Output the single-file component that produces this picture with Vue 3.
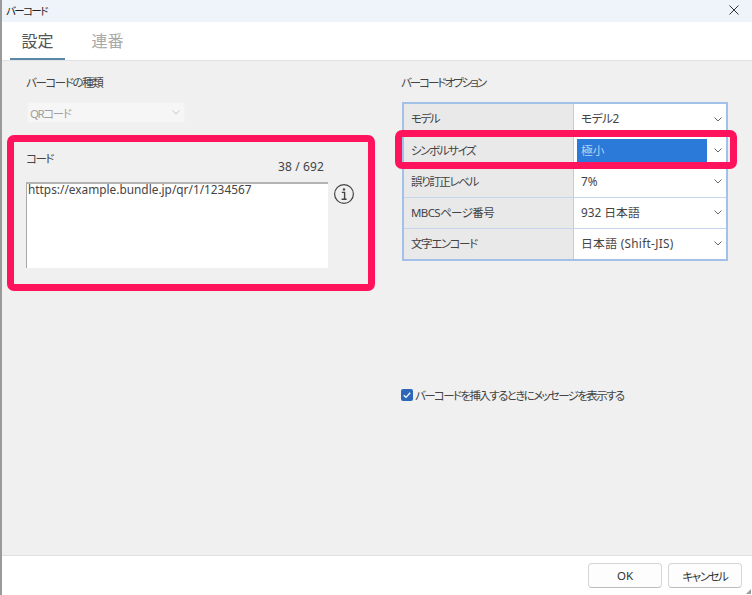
<script setup>
const rows = [
  { label: 'モデル', value: 'モデル2', labelClass: 'kana', valueClass: 'semi' },
  { label: 'シンボルサイズ', value: '極小', labelClass: 'kana', selected: true },
  { label: '誤り訂正レベル', value: '7%', labelClass: 'kana' },
  { label: 'MBCSページ番号', value: '932 日本語', labelClass: 'semi' },
  { label: '文字エンコード', value: '日本語 (Shift-JIS)', labelClass: 'kana', valueClass: 'wide' },
]
</script>

<template>
  <div class="window">
    <header class="titlebar">
      <span class="title">バーコード</span>
      <svg class="close" width="10" height="10" viewBox="0 0 10 10"><path d="M0.5 0.5 9.5 9.5M9.5 0.5 0.5 9.5" stroke="#333" stroke-width="1" fill="none" /></svg>
    </header>
    <nav class="tabs">
      <div class="tab active">設定</div>
      <div class="tab">連番</div>
    </nav>
    <main class="body">
      <section class="left">
        <div class="label kana">バーコードの種類</div>
        <div class="type-select">
          <span class="kana">QRコード</span>
          <svg width="8" height="5" viewBox="0 0 8 5"><path d="M0.5 0.5 4 4 7.5 0.5" stroke="#c4c4c4" fill="none" /></svg>
        </div>
        <div class="code-block">
          <div class="code-head">
            <span class="label kana">コード</span>
            <span class="count">38 / 692</span>
          </div>
          <div class="code-row">
            <div class="code-input">https://example.bundle.jp/qr/1/1234567</div>
            <svg class="info" width="22" height="22" viewBox="0 0 22 22">
              <circle cx="11" cy="11" r="9.4" stroke="#444" stroke-width="1.2" fill="none" />
              <circle cx="11" cy="6.4" r="1.2" fill="#444" />
              <path d="M8.8 9.4H11.6V16M8.6 16.2H13.6" stroke="#444" stroke-width="1.4" fill="none" />
            </svg>
          </div>
        </div>
      </section>
      <section class="right">
        <div class="label wider-kana">バーコードオプション</div>
        <div class="grid">
          <div v-for="row in rows" :key="row.label" class="row">
            <div class="cell-label" :class="row.labelClass">{{ row.label }}</div>
            <div class="cell-value">
              <span class="value" :class="[row.valueClass, { selected: row.selected }]">{{ row.value }}</span>
              <svg width="8" height="5" viewBox="0 0 8 5"><path d="M0.5 0.5 4 4 7.5 0.5" stroke="#666" fill="none" /></svg>
            </div>
          </div>
        </div>
        <label class="check">
          <span class="box">
            <svg width="10" height="10" viewBox="0 0 10 10"><path d="M1.8 5.2 4 7.4 8.2 2.8" stroke="#fff" stroke-width="1.3" fill="none" /></svg>
          </span>
          <span class="check-text">バーコードを挿入するときにメッセージを表示する</span>
        </label>
      </section>
    </main>
    <footer class="footer">
      <button class="btn">OK</button>
      <button class="btn kana">キャンセル</button>
    </footer>
    <svg class="grip" width="5" height="5" viewBox="0 0 5 5"><path d="M5 0V5H0Z" fill="#9a9a9a" /></svg>
    <div class="mark mark-left"></div>
    <div class="mark mark-right"></div>
  </div>
</template>

<style>
html, body { margin: 0; background: #fff; }
</style>

<style scoped>
.window {
  position: relative;
  width: 752px;
  height: 595px;
  box-sizing: border-box;
  display: flex;
  flex-direction: column;
  border-left: 2px solid #9a9a9a;
  background: #fff;
  color: #333;
  font-family: "Noto Sans", "Noto Sans CJK JP", sans-serif;
  font-size: 11.5px;
  font-feature-settings: "palt";
  overflow: hidden;
}
.kana { letter-spacing: -1.4px; }
.check-text { letter-spacing: -1.62px; }
.wider-kana { letter-spacing: -2px; }
.semi { letter-spacing: -0.6px; }
.wide { letter-spacing: 0.3px; }
.titlebar {
  height: 22px;
  flex: none;
  display: flex;
  align-items: center;
  justify-content: space-between;
  padding: 0 13px 2px 4px;
  box-sizing: border-box;
  background: #eff3fa;
  color: #222;
}
.title { font-size: 10.5px; letter-spacing: -1.6px; }
.tabs {
  height: 39px;
  flex: none;
  display: flex;
  box-sizing: border-box;
  padding-left: 8px;
  border-bottom: 1px solid #e2e2e2;
}
.tab {
  width: 55px;
  box-sizing: border-box;
  text-align: center;
  font-size: 16px;
  line-height: 38px;
  color: #a8a8a8;
  height: 38px;
}
.tab + .tab { margin-left: 15px; }
.tab.active {
  color: #555;
  border-bottom: 2px solid #5a88a8;
}
.body {
  flex: 1;
  display: flex;
  background: #f0f0f0;
  border-bottom: 1px solid #e0e0e0;
}
.left {
  width: 399px;
  flex: none;
  box-sizing: border-box;
  padding: 14px 0 0 24px;
}
.right {
  flex: 1;
  padding-top: 14px;
}
.label {
  height: 15px;
  line-height: 15px;
  color: #444;
}
.type-select {
  width: 158px;
  height: 21px;
  box-sizing: border-box;
  margin: 12px 0 0 1px;
  padding: 0 3px 0 2px;
  background: #f6f6f6;
  border: 1px solid #f2f2f2;
  color: #a0a0a0;
  display: flex;
  align-items: center;
  justify-content: space-between;
}
.type-select svg { margin-right: 1px; }
.code-block { margin-top: 28px; }
.code-head {
  width: 298px;
  height: 24px;
  display: flex;
  justify-content: space-between;
}
.count {
  padding-top: 8px;
  line-height: 15px;
  font-size: 12px;
  letter-spacing: 0.12px;
  color: #444;
}
.code-row {
  display: flex;
  align-items: flex-start;
  margin-top: 7px;
}
.code-input {
  width: 302px;
  height: 86px;
  box-sizing: border-box;
  background: #fff;
  border-top: 2px solid #b4b4b4;
  border-left: 1px solid #a8a8a8;
  padding: 0 0 0 1px;
  line-height: 11px;
  font-size: 11.85px;
  color: #444;
}
.info { margin: 1px 0 0 5px; }
.grid {
  width: 326px;
  box-sizing: border-box;
  margin-top: 12px;
  margin-left: 1px;
  border: 2px solid #a3c0e8;
  background: #fff;
}
.row {
  display: flex;
  height: 31px;
  box-sizing: border-box;
}
.row + .row { border-top: 1px solid #c4d5ec; }
.cell-label {
  width: 170px;
  box-sizing: border-box;
  padding-left: 7px;
  background: #e9e9e9;
  border-right: 1px solid #b9cde8;
  line-height: 30px;
  color: #444;
}
.cell-value {
  flex: 1;
  display: flex;
  align-items: center;
  padding: 0 4px 1px 3px;
  gap: 7px;
  color: #444;
  font-size: 11.8px;
}
.cell-value svg { flex: none; }
.value {
  flex: 1;
  height: 24px;
  line-height: 23px;
  padding-left: 4px;
}
.value.selected {
  background: #2b79d8;
  color: #b6d3f3;
}
.check {
  display: flex;
  align-items: center;
  gap: 2px;
  margin-top: 126px;
  color: #444;
}
.box {
  width: 12px;
  height: 12px;
  border-radius: 2px;
  background: #2d68b8;
  display: flex;
  align-items: center;
  justify-content: center;
}
.footer {
  height: 39px;
  flex: none;
  box-sizing: border-box;
  display: flex;
  justify-content: flex-end;
  gap: 6px;
  padding: 7px 10px 0 0;
  background: #fff;
}
.btn {
  width: 74px;
  height: 25px;
  padding: 0;
  font: inherit;
  font-feature-settings: inherit;
  color: #333;
  background: #fdfdfd;
  border: 1px solid #d6d6d6;
  border-bottom-color: #bdbdbd;
  border-radius: 4px;
}
.grip { position: absolute; right: 1px; bottom: 1px; }
.mark {
  position: absolute;
  box-sizing: border-box;
  border: 7px solid #fe135c;
  border-radius: 7px;
  pointer-events: none;
}
.mark-left { left: 5px; top: 135px; width: 368px; height: 156px; }
.mark-right { left: 393px; top: 130px; width: 342px; height: 39px; }
</style>
